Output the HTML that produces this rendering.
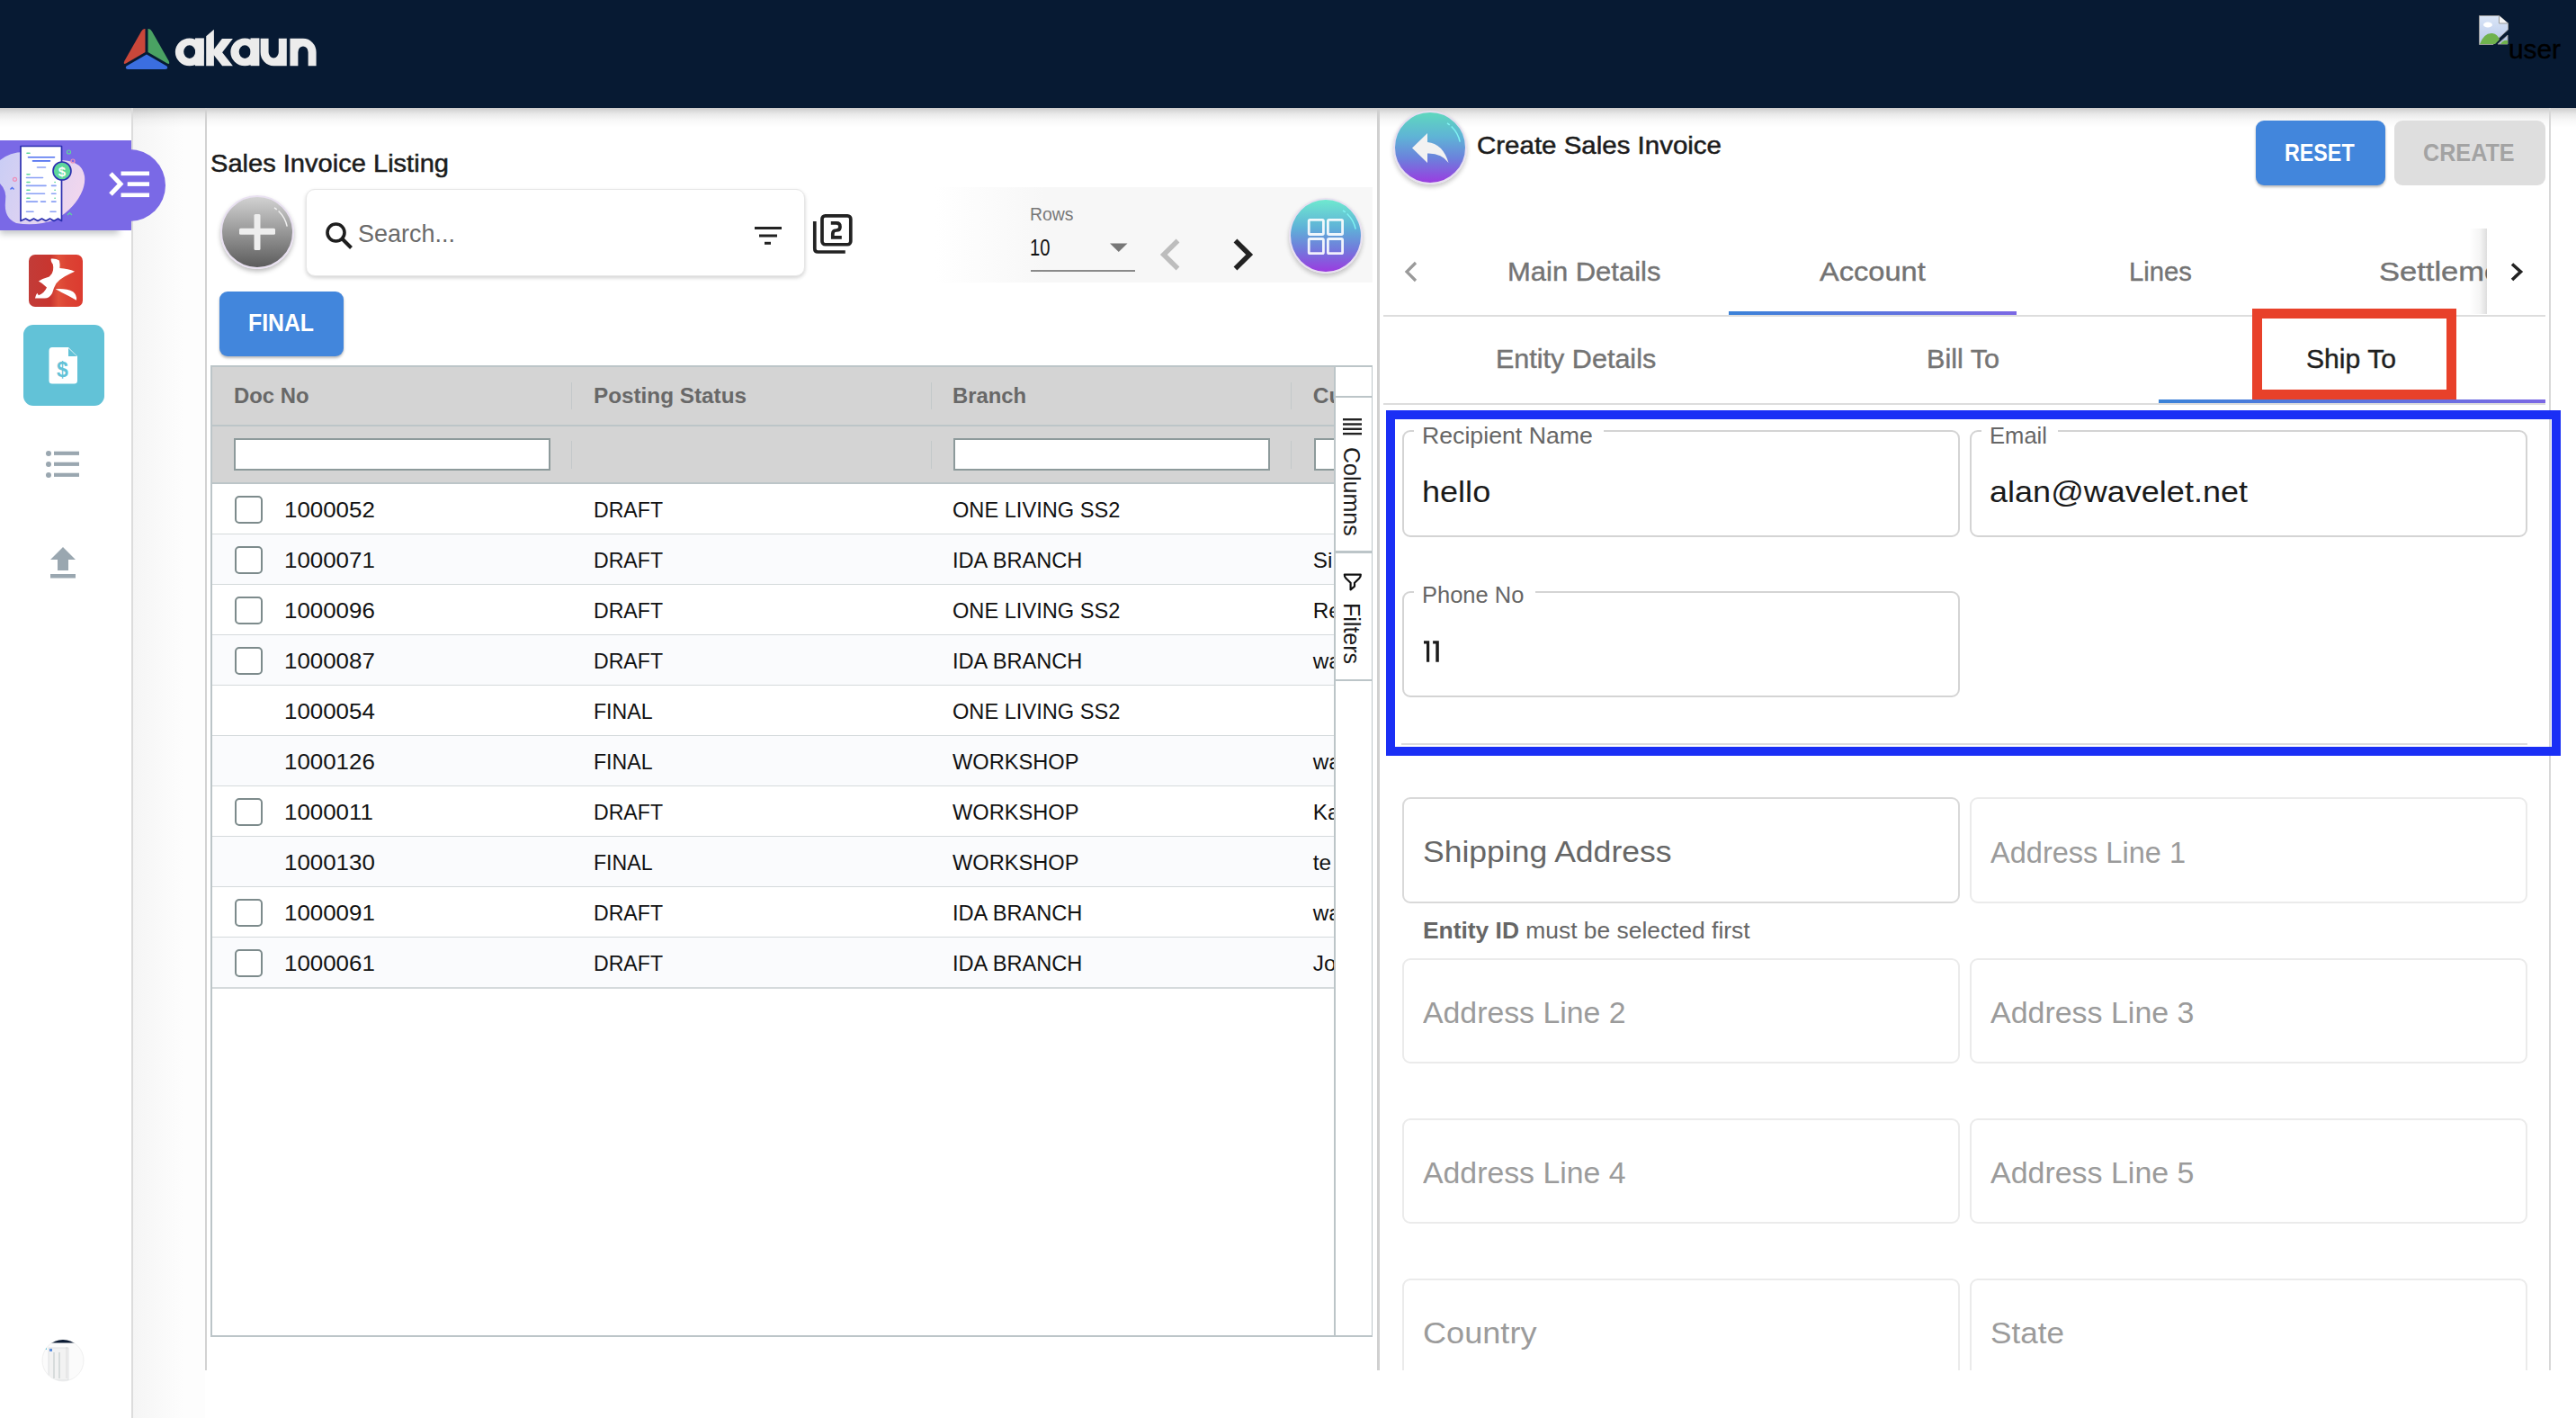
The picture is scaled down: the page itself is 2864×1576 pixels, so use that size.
<!DOCTYPE html>
<html><head><meta charset="utf-8"><title>akaun</title><style>
html,body{margin:0;padding:0;}
body{width:2864px;height:1576px;position:relative;overflow:hidden;background:#fff;font-family:"Liberation Sans", sans-serif;}
.t{position:absolute;white-space:nowrap;line-height:1;}
.b{position:absolute;box-sizing:border-box;}
svg{position:absolute;overflow:visible;}

</style></head><body>
<div class="b" style="left:0.00px;top:0.00px;width:2864.00px;height:120.00px;background:#071a33;"></div>
<div class="b" style="left:0.00px;top:120.00px;width:2864.00px;height:22.00px;background:linear-gradient(rgba(0,0,0,0.2),rgba(0,0,0,0.09) 30%,rgba(0,0,0,0.03) 60%,rgba(0,0,0,0));"></div>
<div class="b" style="left:146.00px;top:120.00px;width:2.00px;height:1456.00px;background:#dcdcdc;"></div>
<div class="b" style="left:148.00px;top:120.00px;width:80.00px;height:1456.00px;background:linear-gradient(90deg,#f5f5f5,#fdfdfd 70%);"></div>
<div class="b" style="left:148.00px;top:120.00px;width:80.00px;height:22.00px;background:linear-gradient(rgba(0,0,0,0.2),rgba(0,0,0,0.09) 30%,rgba(0,0,0,0.03) 60%,rgba(0,0,0,0));"></div>
<div class="b" style="left:228.00px;top:120.00px;width:2.00px;height:1403.00px;background:#d2d2d2;"></div>
<div class="b" style="left:1531.00px;top:120.00px;width:3.00px;height:1403.00px;background:#d0d0d0;"></div>
<div class="b" style="left:2834.00px;top:120.00px;width:1.50px;height:1403.00px;background:#d8d8d8;"></div>
<svg style="left:136px;top:29px" width="56" height="50" viewBox="0 0 56 50">
<path d="M25.5 3 L25.5 29 L4 41.5 Q0.5 43 2.5 38.5 L21 6 Q23 2.5 25.5 3 Z" fill="#c9473a"/>
<path d="M28.5 3 L28.5 29 L50 41.5 Q53.5 43 51.5 38.5 L33 6 Q31 2.5 28.5 3 Z" fill="#4aa263"/>
<path d="M27 31.5 L49.5 44.5 Q51.5 47.5 48 48 L6 48 Q2.5 47.5 4.5 44.5 Z" fill="#3b6ee0"/>
</svg>
<svg style="left:0px;top:0px" width="400" height="110" viewBox="0 0 400 110"><g fill="#ececec">
<path fill-rule="evenodd" d="M194.85 57.8 A15.85 15.4 0 1 0 226.55 57.8 A15.85 15.4 0 1 0 194.85 57.8 Z M204.2 57.6 A6.5 7.3 0 1 0 217.2 57.6 A6.5 7.3 0 1 0 204.2 57.6 Z"/>
<rect x="217" y="42.4" width="9.9" height="30.8"/>
<path d="M229.2 40.2 L237.9 32.85 V73.2 H229.2 Z"/>
<path d="M236.8 56.2 L246.9 42.9 H258.9 L247.1 58.3 L258.9 73.2 H247.1 L236.8 60 Z"/>
<path fill-rule="evenodd" d="M256.35 57.8 A15.85 15.4 0 1 0 288.05 57.8 A15.85 15.4 0 1 0 256.35 57.8 Z M265.7 57.6 A6.5 7.3 0 1 0 278.7 57.6 A6.5 7.3 0 1 0 265.7 57.6 Z"/>
<rect x="278.5" y="42.4" width="9.9" height="30.8"/>
<path d="M289.6 42.7 V57.9 A14.6 15.3 0 0 0 304.2 73.2 H318.8 V42.7 H309.8 V57.9 A5.6 6.5 0 0 1 298.6 57.9 V42.7 Z"/>
<path d="M322.4 73.2 V42.7 H337 A14.6 15.3 0 0 1 351.6 57.9 V73.2 H342.6 V57.9 A5.6 6.5 0 0 0 331.4 57.9 V73.2 Z"/>
</g></svg>
<svg style="left:2756px;top:17px" width="33" height="33" viewBox="0 0 33 33">
<defs><linearGradient id="bi" x1="0" y1="0" x2="0" y2="1"><stop offset="0" stop-color="#dbe6f7"/><stop offset="1" stop-color="#b7c8ea"/></linearGradient></defs>
<path d="M0.5 0.5 H22.5 L32.5 9 V16 L16 31 V32.5 H0.5 Z" fill="url(#bi)" stroke="#9a9a9a" stroke-width="1"/>
<path d="M22.5 0.5 V9 H32.5" fill="#f4f4f4" stroke="#9a9a9a" stroke-width="1"/>
<path d="M1 32 Q6 19 15 20 Q21 21 23 27 L18 32 Z" fill="#6fb24d"/>
<path d="M21 32 L32 22 V32 Z" fill="#b7c8ea" stroke="#9a9a9a" stroke-width="1"/>
<path d="M24 32 Q27 27 32 28 V32 Z" fill="#6fb24d"/>
<ellipse cx="10" cy="10.5" rx="5" ry="3" fill="#fff"/>
</svg>
<div id="t0" class="t" style="left:2788.80px;top:40.95px;font-size:29.00px;color:#000;font-weight:400;transform:scaleX(1.0280);transform-origin:0 0;-webkit-text-stroke:0.4px #000;">user</div>
<div class="b" style="left:0.00px;top:156.00px;width:146.00px;height:99.50px;background:#7a69e6;"></div>
<div class="b" style="left:0.00px;top:200.00px;width:132.00px;height:55.50px;background:#7a69e6;box-shadow:0 4px 7px rgba(40,50,60,0.28);"></div>
<div class="b" style="left:0.00px;top:156.00px;width:146.00px;height:99.50px;background:#7a69e6;"></div>
<div class="b" style="left:60.00px;top:165.70px;width:124.00px;height:80.50px;background:#7a69e6;border-radius:0 40px 40px 0;"></div>
<svg style="left:0px;top:156px" width="100" height="100" viewBox="0 0 100 100">
<defs><linearGradient id="blob" x1="0" y1="0" x2="1" y2="0.3"><stop offset="0" stop-color="#c9cdf5"/><stop offset="1" stop-color="#efd6ee"/></linearGradient></defs>
<path d="M0 22 Q12 12 30 13 L68 22 Q80 22 88 28 Q98 38 92 55 Q84 75 62 88 Q40 96 18 92 Q4 86 6 68 Q8 56 0 48 Z" fill="url(#blob)"/>
<path d="M23 6.5 H68.5 V89.5 L64.5 87 L60 89.5 L55.5 87 L51 89.5 L46.5 87 L42 89.5 L37.5 87 L33 89.5 L28.5 87 L23 89.5 Z" fill="#fff" stroke="#2b2fb0" stroke-width="1.7" stroke-linejoin="round"/>
<g stroke-width="1.6" stroke-linecap="round">
<line x1="30" y1="14.2" x2="33" y2="14.2" stroke="#5ed79b"/>
<line x1="31.5" y1="18.7" x2="60.5" y2="18.7" stroke="#4e6ef0"/>
<line x1="36.5" y1="22.9" x2="55.5" y2="22.9" stroke="#4e6ef0"/>
<line x1="41.5" y1="30" x2="50.5" y2="30" stroke="#8aa0f5"/>
<line x1="30" y1="37.7" x2="33" y2="37.7" stroke="#5ed79b"/>
<line x1="29.5" y1="41.5" x2="47.5" y2="41.5" stroke="#8aa0f5"/>
<line x1="30" y1="46.5" x2="33" y2="46.5" stroke="#5ed79b"/>
<line x1="29.5" y1="50.4" x2="51" y2="50.4" stroke="#8aa0f5"/>
<line x1="57.5" y1="50.4" x2="62" y2="50.4" stroke="#8aa0f5"/>
<line x1="61" y1="46.5" x2="61.2" y2="46.5" stroke="#5ed79b"/>
<line x1="30" y1="55.3" x2="33" y2="55.3" stroke="#5ed79b"/>
<line x1="61" y1="55.3" x2="61.2" y2="55.3" stroke="#5ed79b"/>
<line x1="29.5" y1="59.2" x2="49.5" y2="59.2" stroke="#8aa0f5"/>
<line x1="57.5" y1="59.2" x2="62" y2="59.2" stroke="#8aa0f5"/>
<line x1="30" y1="64.2" x2="33" y2="64.2" stroke="#5ed79b"/>
<line x1="61" y1="64.2" x2="61.2" y2="64.2" stroke="#5ed79b"/>
<line x1="29.5" y1="68.1" x2="41.5" y2="68.1" stroke="#8aa0f5"/>
<line x1="45.5" y1="68.1" x2="50.5" y2="68.1" stroke="#8aa0f5"/>
<line x1="57.5" y1="68.1" x2="62" y2="68.1" stroke="#8aa0f5"/>
<line x1="29.5" y1="79.3" x2="37" y2="79.3" stroke="#8aa0f5"/>
<line x1="56" y1="79.3" x2="62" y2="79.3" stroke="#8aa0f5"/>
</g>
<circle cx="69" cy="34" r="10" fill="#5ed79b" stroke="#2b2fb0" stroke-width="1.6"/>
<text x="69" y="39.5" font-family="Liberation Sans" font-weight="700" font-size="15" fill="#fff" text-anchor="middle">$</text>
<circle cx="76.5" cy="13" r="2" fill="none" stroke="#5ed79b" stroke-width="1.2"/>
<circle cx="81" cy="23" r="2" fill="none" stroke="#ee8fb8" stroke-width="1.2"/>
<circle cx="16.5" cy="43.3" r="2" fill="none" stroke="#ee8fb8" stroke-width="1.3"/>
<path d="M11.5 54.5 L13.5 52.5 L15.5 54.5" fill="none" stroke="#4e6ef0" stroke-width="1.4"/>
<path d="M75 83 L77.5 80.5 L80 83" fill="none" stroke="#5ed79b" stroke-width="1.2"/>
</svg>
<svg style="left:120px;top:188px" width="50" height="34" viewBox="0 0 50 34">
<path d="M3 5 L14 16.5 L3 28" fill="none" stroke="#fff" stroke-width="5"/>
<rect x="14.5" y="2.5" width="31.5" height="4.6" fill="#fff"/>
<rect x="21.7" y="14.3" width="24.3" height="4.6" fill="#fff"/>
<rect x="14.5" y="26.5" width="31.5" height="4.6" fill="#fff"/>
</svg>
<svg style="left:32px;top:283px" width="60" height="58" viewBox="0 0 60 58">
<defs><linearGradient id="rg" x1="0" y1="0" x2="1" y2="0">
<stop offset="0" stop-color="#c23c38"/><stop offset="0.4" stop-color="#c8352f"/><stop offset="0.55" stop-color="#e1513b"/><stop offset="0.7" stop-color="#dc4434"/><stop offset="1" stop-color="#dc3b30"/></linearGradient></defs>
<rect x="0" y="0" width="60" height="58" rx="7" fill="url(#rg)"/>
<path d="M24.8 4.6 Q30 4 33.9 6.5 Q35 11 34.4 15.1 Q44 15.5 51.1 18.8 Q45 21.5 40 24.3 Q33.5 28 30.5 32 Q27.5 37 26 43 Q23 48.5 17.6 48.5 L7 48.5 Q7.5 45 9.4 42.8 L10.9 45.3 Q17.5 42.5 20 36.5 Q15 31.5 10.9 29.5 Q17 26 22.8 24.5 Q26.5 21.5 27 17.5 Q27.5 13 26.8 10.8 Q24 7 24.8 4.6 Z" fill="#fff"/>
<path d="M29.6 38.2 Q42 37.3 49.2 41.3 Q53.8 45 53 50.8 Q44.5 45.8 36.5 42 Q33 39.8 29.6 38.2 Z" fill="#fff"/>
</svg>
<div class="b" style="left:26.00px;top:361.00px;width:90.00px;height:90.00px;background:#62c2d7;border-radius:11px;"></div>
<svg style="left:54px;top:386px" width="33" height="41" viewBox="0 0 33 41">
<path d="M4 0 H22 L32 10 V37 Q32 40.5 28.5 40.5 H4 Q0.5 40.5 0.5 37 V4 Q0.5 0 4 0 Z" fill="#fff"/>
<path d="M22 1 V10 H31.5 Z" fill="#62c2d7"/>
<text x="15.5" y="33" font-family="Liberation Sans" font-weight="700" font-size="23" fill="#62c2d7" text-anchor="middle">$</text>
</svg>
<svg style="left:50px;top:500px" width="40" height="32" viewBox="0 0 40 32">
<circle cx="4" cy="4" r="3" fill="#9aa7b0"/><circle cx="4" cy="16" r="3" fill="#9aa7b0"/><circle cx="4" cy="28" r="3" fill="#9aa7b0"/>
<rect x="10" y="1.7" width="28" height="4.2" fill="#9aa7b0"/><rect x="10" y="13.7" width="28" height="4.2" fill="#9aa7b0"/><rect x="10" y="25.7" width="28" height="4.2" fill="#9aa7b0"/>
</svg>
<svg style="left:56px;top:608px" width="29" height="35" viewBox="0 0 29 35">
<path d="M14 0 L28 14 H20 V26 H8 V14 H0 Z" fill="#9aa7b0"/>
<rect x="0" y="30" width="28" height="4.5" fill="#9aa7b0"/>
</svg>
<svg style="left:46px;top:1488px" width="48" height="48" viewBox="0 0 48 48">
<defs><clipPath id="av"><circle cx="24" cy="24" r="23"/></clipPath></defs>
<circle cx="24" cy="24" r="23" fill="#fbfbfb" stroke="#f0f0f0" stroke-width="1"/>
<g clip-path="url(#av)">
<rect x="0" y="0" width="48" height="4.5" fill="#0b1a33"/>
<rect x="8" y="10" width="22" height="36" fill="#f2f2f2" stroke="#cfd4d8" stroke-width="0.6"/>
<rect x="9" y="11" width="3" height="3" fill="#5b8fe0"/>
<rect x="2" y="9" width="4" height="3" fill="#62c2d7"/>
<line x1="14" y1="15" x2="14" y2="44" stroke="#9aa" stroke-width="0.6"/>
<line x1="20" y1="15" x2="20" y2="44" stroke="#9aa" stroke-width="0.6"/>
<line x1="28" y1="9" x2="28" y2="44" stroke="#ccc" stroke-width="0.6"/>
</g>
</svg>
<div id="t1" class="t" style="left:233.80px;top:167.72px;font-size:27.50px;color:#1c1c1c;font-weight:400;transform:scaleX(1.0570);transform-origin:0 0;-webkit-text-stroke:0.5px #1c1c1c;">Sales Invoice Listing</div>
<div class="b" style="left:245px;top:217px;width:82px;height:82px;border-radius:50%;background:linear-gradient(#d2d2d2,#5c5c5c);border:2px solid #e9e1f1;box-shadow:0 3px 5px rgba(0,0,0,0.25);"></div>
<svg style="left:245px;top:217px" width="82" height="82" viewBox="0 0 82 82">
<rect x="21" y="36.8" width="40" height="7" rx="1.5" fill="#eeeeee"/>
<rect x="37.5" y="21" width="7" height="40" rx="1.5" fill="#eeeeee"/>
<path d="M60 13.8 A34 34 0 0 1 74.2 34.6" fill="none" stroke="#f0f0f0" stroke-width="1.5" stroke-dasharray="3.5 2.5 60"/>
</svg>
<div class="b" style="left:340.00px;top:210.00px;width:555.00px;height:96.50px;background:#fff;border-radius:10px;border:1px solid #e6e6e6;box-shadow:0 2px 4px rgba(0,0,0,0.18);"></div>
<svg style="left:361px;top:246px" width="33" height="33" viewBox="0 0 33 33">
<circle cx="12.5" cy="12.5" r="9.5" fill="none" stroke="#1e1e1e" stroke-width="3.6"/>
<line x1="19.5" y1="19.5" x2="29.5" y2="29.5" stroke="#1e1e1e" stroke-width="4"/>
</svg>
<div id="t2" class="t" style="left:397.80px;top:245.72px;font-size:27.50px;color:#6a6a6a;font-weight:400;transform:scaleX(0.9813);transform-origin:0 0;">Search...</div>
<svg style="left:838px;top:251px" width="32" height="22" viewBox="0 0 32 22">
<rect x="1" y="1" width="30" height="3" fill="#222"/>
<rect x="6" y="9.5" width="20" height="3" fill="#222"/>
<rect x="12" y="17.8" width="7" height="3" fill="#222"/>
</svg>
<svg style="left:903px;top:237px" width="46" height="46" viewBox="0 0 46 46">
<path d="M2.8 9 V39.5 Q2.8 43 6.3 43 H36.8" fill="none" stroke="#222" stroke-width="3.7"/>
<rect x="11" y="2.85" width="31.8" height="31.9" rx="3.5" fill="none" stroke="#222" stroke-width="3.7"/>
<path d="M20.8 10.9 H27 Q31 10.9 31 15 Q31 19 27 19 H26.8 Q22.8 19 22.8 23 V26.85 H32.8" fill="none" stroke="#222" stroke-width="3.7"/>
</svg>
<div class="b" style="left:1040.00px;top:208.00px;width:486.00px;height:105.50px;background:linear-gradient(90deg,rgba(247,247,247,0),#f7f7f7 25%,#f7f7f7);"></div>
<div id="t3" class="t" style="left:1145.30px;top:227.64px;font-size:20.50px;color:#777;font-weight:400;transform:scaleX(0.9461);transform-origin:0 0;">Rows</div>
<div id="t4" class="t" style="left:1145.30px;top:261.56px;font-size:26.50px;color:#111;font-weight:400;transform:scaleX(0.7631);transform-origin:0 0;">10</div>
<svg style="left:1233px;top:270px" width="22" height="11" viewBox="0 0 22 11"><path d="M1 0.5 H20.5 L10.75 10 Z" fill="#777"/></svg>
<div class="b" style="left:1146.00px;top:299.80px;width:116.00px;height:2.00px;background:#8a8a8a;"></div>
<svg style="left:1286px;top:264px" width="30" height="40" viewBox="0 0 30 40">
<path d="M23.5 3.5 L7.8 19 L23.5 34.5" fill="none" stroke="#bdbdbd" stroke-width="5.5"/>
</svg>
<svg style="left:1367px;top:264px" width="30" height="40" viewBox="0 0 30 40">
<path d="M6.5 3.5 L22.2 19 L6.5 34.5" fill="none" stroke="#222" stroke-width="5.5"/>
</svg>
<div class="b" style="left:1433px;top:220px;width:82px;height:84px;border-radius:50%;background:linear-gradient(#6fe9cf,#5fb0d8 40%,#7378dc 70%,#9b3be0);border:2px solid #e8e0f0;box-shadow:0 3px 5px rgba(0,0,0,0.22);"></div>
<svg style="left:1433px;top:220px" width="82" height="84" viewBox="0 0 82 84">
<g fill="none" stroke="#fff" stroke-opacity="0.9" stroke-width="2.8">
<rect x="22.2" y="24.3" width="16.2" height="16.2" rx="1.2"/><rect x="43.4" y="24.3" width="16.2" height="16.2" rx="1.2"/>
<rect x="22.2" y="45.5" width="16.2" height="16.2" rx="1.2"/><rect x="43.4" y="45.5" width="16.2" height="16.2" rx="1.2"/>
</g>
<path d="M60 13.8 A34 34 0 0 1 74.2 34.6" fill="none" stroke="#80f2f2" stroke-width="1.5" stroke-dasharray="3.5 2.5 60"/>
</svg>
<div class="b" style="left:244.00px;top:324.00px;width:138.00px;height:72.00px;background:#4286dc;border-radius:9px;box-shadow:0 2px 3px rgba(0,0,0,0.28);"></div>
<div id="t5" class="t" style="left:275.80px;top:344.47px;font-size:28.50px;color:#fff;font-weight:700;transform:scaleX(0.8700);transform-origin:0 0;">FINAL</div>
<div class="b" style="left:234.00px;top:406.00px;width:1291.50px;height:1079.50px;border:2px solid #bcc5c8;background:#fff;"></div>
<div class="b" style="left:236.00px;top:408.00px;width:1247.00px;height:129.00px;background:#d4d4d4;"></div>
<div class="b" style="left:236.00px;top:471.80px;width:1247.00px;height:2.00px;background:#bcc5c8;"></div>
<div class="b" style="left:236.00px;top:536.00px;width:1247.00px;height:2.00px;background:#bcc5c8;"></div>
<div class="b" style="left:634.50px;top:425.00px;width:1.50px;height:30.00px;background:#c3c8ca;"></div>
<div class="b" style="left:634.50px;top:490.00px;width:1.50px;height:31.00px;background:#c3c8ca;"></div>
<div class="b" style="left:1034.50px;top:425.00px;width:1.50px;height:30.00px;background:#c3c8ca;"></div>
<div class="b" style="left:1034.50px;top:490.00px;width:1.50px;height:31.00px;background:#c3c8ca;"></div>
<div class="b" style="left:1434.50px;top:425.00px;width:1.50px;height:30.00px;background:#c3c8ca;"></div>
<div class="b" style="left:1434.50px;top:490.00px;width:1.50px;height:31.00px;background:#c3c8ca;"></div>
<div id="t6" class="t" style="left:259.80px;top:428.06px;font-size:24.50px;color:#686868;font-weight:700;transform:scaleX(0.9738);transform-origin:0 0;">Doc No</div>
<div id="t7" class="t" style="left:659.80px;top:428.06px;font-size:24.50px;color:#686868;font-weight:700;transform:scaleX(0.9912);transform-origin:0 0;">Posting Status</div>
<div id="t8" class="t" style="left:1058.80px;top:428.06px;font-size:24.50px;color:#686868;font-weight:700;transform:scaleX(0.9713);transform-origin:0 0;">Branch</div>
<div id="t9" class="t" style="left:1459.80px;top:428.06px;font-size:24.50px;color:#686868;font-weight:700;">Cu</div>
<div class="b" style="left:260.00px;top:487.00px;width:351.50px;height:35.50px;background:#fff;border:2px solid #8d9a9b;"></div>
<div class="b" style="left:1060.00px;top:487.00px;width:351.50px;height:35.50px;background:#fff;border:2px solid #8d9a9b;"></div>
<div class="b" style="left:1460.50px;top:487.00px;width:30.00px;height:35.50px;background:#fff;border:2px solid #8d9a9b;"></div>
<div class="b" style="left:236.00px;top:592.55px;width:1247.00px;height:1.50px;background:#d5dadc;"></div>
<div class="b" style="left:260.50px;top:550.50px;width:31.00px;height:31.00px;border:2px solid #7d8b8c;border-radius:5px;background:#fff;"></div>
<div id="t10" class="t" style="left:315.50px;top:554.83px;font-size:24.30px;color:#111;font-weight:400;transform:scaleX(1.066);transform-origin:0 0;">1000052</div>
<div id="t11" class="t" style="left:659.80px;top:554.83px;font-size:24.30px;color:#111;font-weight:400;transform:scaleX(0.951);transform-origin:0 0;">DRAFT</div>
<div id="t12" class="t" style="left:1059.40px;top:554.83px;font-size:24.30px;color:#111;font-weight:400;transform:scaleX(0.972);transform-origin:0 0;">ONE LIVING SS2</div>
<div class="b" style="left:236.00px;top:594.05px;width:1247.00px;height:56.05px;background:#fafbfd;"></div>
<div class="b" style="left:236.00px;top:648.60px;width:1247.00px;height:1.50px;background:#d5dadc;"></div>
<div class="b" style="left:260.50px;top:606.55px;width:31.00px;height:31.00px;border:2px solid #7d8b8c;border-radius:5px;background:#fff;"></div>
<div id="t13" class="t" style="left:315.50px;top:610.88px;font-size:24.30px;color:#111;font-weight:400;transform:scaleX(1.066);transform-origin:0 0;">1000071</div>
<div id="t14" class="t" style="left:659.80px;top:610.88px;font-size:24.30px;color:#111;font-weight:400;transform:scaleX(0.951);transform-origin:0 0;">DRAFT</div>
<div id="t15" class="t" style="left:1059.40px;top:610.88px;font-size:24.30px;color:#111;font-weight:400;transform:scaleX(0.972);transform-origin:0 0;">IDA BRANCH</div>
<div id="t16" class="t" style="left:1459.80px;top:610.88px;font-size:24.30px;color:#111;font-weight:400;">Si</div>
<div class="b" style="left:236.00px;top:704.65px;width:1247.00px;height:1.50px;background:#d5dadc;"></div>
<div class="b" style="left:260.50px;top:662.60px;width:31.00px;height:31.00px;border:2px solid #7d8b8c;border-radius:5px;background:#fff;"></div>
<div id="t17" class="t" style="left:315.50px;top:666.93px;font-size:24.30px;color:#111;font-weight:400;transform:scaleX(1.066);transform-origin:0 0;">1000096</div>
<div id="t18" class="t" style="left:659.80px;top:666.93px;font-size:24.30px;color:#111;font-weight:400;transform:scaleX(0.951);transform-origin:0 0;">DRAFT</div>
<div id="t19" class="t" style="left:1059.40px;top:666.93px;font-size:24.30px;color:#111;font-weight:400;transform:scaleX(0.972);transform-origin:0 0;">ONE LIVING SS2</div>
<div id="t20" class="t" style="left:1459.80px;top:666.93px;font-size:24.30px;color:#111;font-weight:400;">Re</div>
<div class="b" style="left:236.00px;top:706.15px;width:1247.00px;height:56.05px;background:#fafbfd;"></div>
<div class="b" style="left:236.00px;top:760.70px;width:1247.00px;height:1.50px;background:#d5dadc;"></div>
<div class="b" style="left:260.50px;top:718.65px;width:31.00px;height:31.00px;border:2px solid #7d8b8c;border-radius:5px;background:#fff;"></div>
<div id="t21" class="t" style="left:315.50px;top:722.98px;font-size:24.30px;color:#111;font-weight:400;transform:scaleX(1.066);transform-origin:0 0;">1000087</div>
<div id="t22" class="t" style="left:659.80px;top:722.98px;font-size:24.30px;color:#111;font-weight:400;transform:scaleX(0.951);transform-origin:0 0;">DRAFT</div>
<div id="t23" class="t" style="left:1059.40px;top:722.98px;font-size:24.30px;color:#111;font-weight:400;transform:scaleX(0.972);transform-origin:0 0;">IDA BRANCH</div>
<div id="t24" class="t" style="left:1459.80px;top:722.98px;font-size:24.30px;color:#111;font-weight:400;">wa</div>
<div class="b" style="left:236.00px;top:816.75px;width:1247.00px;height:1.50px;background:#d5dadc;"></div>
<div id="t25" class="t" style="left:315.50px;top:779.03px;font-size:24.30px;color:#111;font-weight:400;transform:scaleX(1.066);transform-origin:0 0;">1000054</div>
<div id="t26" class="t" style="left:659.80px;top:779.03px;font-size:24.30px;color:#111;font-weight:400;transform:scaleX(0.951);transform-origin:0 0;">FINAL</div>
<div id="t27" class="t" style="left:1059.40px;top:779.03px;font-size:24.30px;color:#111;font-weight:400;transform:scaleX(0.972);transform-origin:0 0;">ONE LIVING SS2</div>
<div class="b" style="left:236.00px;top:818.25px;width:1247.00px;height:56.05px;background:#fafbfd;"></div>
<div class="b" style="left:236.00px;top:872.80px;width:1247.00px;height:1.50px;background:#d5dadc;"></div>
<div id="t28" class="t" style="left:315.50px;top:835.08px;font-size:24.30px;color:#111;font-weight:400;transform:scaleX(1.066);transform-origin:0 0;">1000126</div>
<div id="t29" class="t" style="left:659.80px;top:835.08px;font-size:24.30px;color:#111;font-weight:400;transform:scaleX(0.951);transform-origin:0 0;">FINAL</div>
<div id="t30" class="t" style="left:1059.40px;top:835.08px;font-size:24.30px;color:#111;font-weight:400;transform:scaleX(0.972);transform-origin:0 0;">WORKSHOP</div>
<div id="t31" class="t" style="left:1459.80px;top:835.08px;font-size:24.30px;color:#111;font-weight:400;">wa</div>
<div class="b" style="left:236.00px;top:928.85px;width:1247.00px;height:1.50px;background:#d5dadc;"></div>
<div class="b" style="left:260.50px;top:886.80px;width:31.00px;height:31.00px;border:2px solid #7d8b8c;border-radius:5px;background:#fff;"></div>
<div id="t32" class="t" style="left:315.50px;top:891.13px;font-size:24.30px;color:#111;font-weight:400;transform:scaleX(1.066);transform-origin:0 0;">1000011</div>
<div id="t33" class="t" style="left:659.80px;top:891.13px;font-size:24.30px;color:#111;font-weight:400;transform:scaleX(0.951);transform-origin:0 0;">DRAFT</div>
<div id="t34" class="t" style="left:1059.40px;top:891.13px;font-size:24.30px;color:#111;font-weight:400;transform:scaleX(0.972);transform-origin:0 0;">WORKSHOP</div>
<div id="t35" class="t" style="left:1459.80px;top:891.13px;font-size:24.30px;color:#111;font-weight:400;">Ka</div>
<div class="b" style="left:236.00px;top:930.35px;width:1247.00px;height:56.05px;background:#fafbfd;"></div>
<div class="b" style="left:236.00px;top:984.90px;width:1247.00px;height:1.50px;background:#d5dadc;"></div>
<div id="t36" class="t" style="left:315.50px;top:947.18px;font-size:24.30px;color:#111;font-weight:400;transform:scaleX(1.066);transform-origin:0 0;">1000130</div>
<div id="t37" class="t" style="left:659.80px;top:947.18px;font-size:24.30px;color:#111;font-weight:400;transform:scaleX(0.951);transform-origin:0 0;">FINAL</div>
<div id="t38" class="t" style="left:1059.40px;top:947.18px;font-size:24.30px;color:#111;font-weight:400;transform:scaleX(0.972);transform-origin:0 0;">WORKSHOP</div>
<div id="t39" class="t" style="left:1459.80px;top:947.18px;font-size:24.30px;color:#111;font-weight:400;">te</div>
<div class="b" style="left:236.00px;top:1040.95px;width:1247.00px;height:1.50px;background:#d5dadc;"></div>
<div class="b" style="left:260.50px;top:998.90px;width:31.00px;height:31.00px;border:2px solid #7d8b8c;border-radius:5px;background:#fff;"></div>
<div id="t40" class="t" style="left:315.50px;top:1003.23px;font-size:24.30px;color:#111;font-weight:400;transform:scaleX(1.066);transform-origin:0 0;">1000091</div>
<div id="t41" class="t" style="left:659.80px;top:1003.23px;font-size:24.30px;color:#111;font-weight:400;transform:scaleX(0.951);transform-origin:0 0;">DRAFT</div>
<div id="t42" class="t" style="left:1059.40px;top:1003.23px;font-size:24.30px;color:#111;font-weight:400;transform:scaleX(0.972);transform-origin:0 0;">IDA BRANCH</div>
<div id="t43" class="t" style="left:1459.80px;top:1003.23px;font-size:24.30px;color:#111;font-weight:400;">wa</div>
<div class="b" style="left:236.00px;top:1042.45px;width:1247.00px;height:56.05px;background:#fafbfd;"></div>
<div class="b" style="left:236.00px;top:1097.00px;width:1247.00px;height:1.50px;background:#d5dadc;"></div>
<div class="b" style="left:260.50px;top:1054.95px;width:31.00px;height:31.00px;border:2px solid #7d8b8c;border-radius:5px;background:#fff;"></div>
<div id="t44" class="t" style="left:315.50px;top:1059.28px;font-size:24.30px;color:#111;font-weight:400;transform:scaleX(1.066);transform-origin:0 0;">1000061</div>
<div id="t45" class="t" style="left:659.80px;top:1059.28px;font-size:24.30px;color:#111;font-weight:400;transform:scaleX(0.951);transform-origin:0 0;">DRAFT</div>
<div id="t46" class="t" style="left:1059.40px;top:1059.28px;font-size:24.30px;color:#111;font-weight:400;transform:scaleX(0.972);transform-origin:0 0;">IDA BRANCH</div>
<div id="t47" class="t" style="left:1459.80px;top:1059.28px;font-size:24.30px;color:#111;font-weight:400;">Jo</div>
<div class="b" style="left:1483.00px;top:408.00px;width:41.50px;height:1075.50px;background:#fff;border-left:2px solid #bcc5c8;"></div>
<div class="b" style="left:1485.00px;top:440.00px;width:39.50px;height:2.00px;background:#bcc5c8;"></div>
<div class="b" style="left:1485.00px;top:611.50px;width:39.50px;height:3.00px;background:#bcc5c8;"></div>
<div class="b" style="left:1485.00px;top:755.00px;width:39.50px;height:2.00px;background:#bcc5c8;"></div>
<svg style="left:1493px;top:465px" width="22" height="19" viewBox="0 0 22 19">
<g fill="#222"><rect x="0" y="0" width="21" height="2.4"/><rect x="0" y="5.3" width="21" height="2.4"/><rect x="0" y="10.6" width="21" height="2.4"/><rect x="0" y="15.9" width="21" height="2.4"/></g>
</svg>
<div class="t" style="left:1494px;top:496.5px;font-size:25px;color:#1a1a1a;transform-origin:0 0;transform:translate(21px,0) rotate(90deg);">Columns</div>
<svg style="left:1493px;top:637px" width="22" height="21" viewBox="0 0 22 21">
<path d="M1.8 1.6 H19.8 Q20 4 18.2 5.8 L13 10.8 V14.6 L8.6 18.4 V10.8 L3.4 5.8 Q1.6 4 1.8 1.6 Z" fill="none" stroke="#111" stroke-width="2.2" stroke-linejoin="round"/>
</svg>
<div class="t" style="left:1494px;top:670px;font-size:25px;color:#1a1a1a;transform-origin:0 0;transform:translate(21px,0) rotate(90deg);">Filters</div>
<div class="b" style="left:1534px;top:120px;width:1300px;height:1403px;overflow:hidden;">
<div class="b" style="left:15.00px;top:3.00px;width:82.00px;height:82.00px;border-radius:50%;background:linear-gradient(#5fd8be,#5fb3d6 35%,#6b82dc 65%,#9a3ce0);border:2px solid #e6dff0;box-shadow:0 3px 5px rgba(0,0,0,0.22);"></div>
<svg style="left:15.00px;top:3.00px" width="82" height="82" viewBox="0 0 82 82"><path d="M21 41.5 L38 25 V35 Q55 36.5 61.5 58 Q54 47 38 47.5 V58 Z" fill="#f2f2f2"/><path d="M60 13.8 A34 34 0 0 1 74.2 34.6" fill="none" stroke="#80f2f2" stroke-width="1.5" stroke-dasharray="3.5 2.5 60"/></svg>
<div id="t48" class="t" style="left:107.80px;top:28.42px;font-size:27.50px;color:#1c1c1c;font-weight:400;transform:scaleX(1.0719);transform-origin:0 0;-webkit-text-stroke:0.5px #1c1c1c;">Create Sales Invoice</div>
<div class="b" style="left:974.00px;top:14.00px;width:144.00px;height:72.00px;background:#4286dc;border-radius:9px;box-shadow:0 2px 3px rgba(0,0,0,0.28);"></div>
<div id="t49" class="t" style="left:1006.20px;top:35.07px;font-size:28.50px;color:#fff;font-weight:700;transform:scaleX(0.8166);transform-origin:0 0;">RESET</div>
<div class="b" style="left:1128.00px;top:14.00px;width:168.00px;height:72.00px;background:#dedede;border-radius:9px;"></div>
<div id="t50" class="t" style="left:1159.50px;top:35.07px;font-size:28.50px;color:#a3a3a3;font-weight:700;transform:scaleX(0.8830);transform-origin:0 0;">CREATE</div>
<svg style="left:24.00px;top:168.00px" width="24" height="30" viewBox="0 0 24 30"><path d="M16 4 L6 14 L16 24" fill="none" stroke="#9a9a9a" stroke-width="3.2"/></svg>
<div id="t51" class="t" style="left:141.80px;top:166.72px;font-size:29.50px;color:#747474;font-weight:400;transform:scaleX(1.0498);transform-origin:0 0;-webkit-text-stroke:0.4px #747474;">Main Details</div>
<div id="t52" class="t" style="left:488.80px;top:166.72px;font-size:29.50px;color:#737373;font-weight:400;transform:scaleX(1.1042);transform-origin:0 0;-webkit-text-stroke:0.4px #737373;">Account</div>
<div id="t53" class="t" style="left:832.80px;top:166.72px;font-size:29.50px;color:#747474;font-weight:400;transform:scaleX(0.9925);transform-origin:0 0;-webkit-text-stroke:0.4px #747474;">Lines</div>
<div id="t54" class="t" style="left:1110.80px;top:166.72px;font-size:29.50px;color:#747474;font-weight:400;transform:scaleX(1.1700);transform-origin:0 0;-webkit-text-stroke:0.4px #747474;">Settlement</div>
<div class="b" style="left:4.00px;top:230.00px;width:1292.00px;height:2.00px;background:#dddddd;"></div>
<div class="b" style="left:388.00px;top:226.00px;width:319.50px;height:4.00px;background:linear-gradient(90deg,#3b82d8,#7b68e4);"></div>
<div class="b" style="left:1211.00px;top:134.00px;width:20.00px;height:95.00px;background:linear-gradient(90deg,rgba(0,0,0,0),rgba(0,0,0,0.04) 60%,rgba(0,0,0,0.13));"></div>
<div class="b" style="left:1231.00px;top:134.00px;width:70.00px;height:95.00px;background:#fff;"></div>
<svg style="left:1250.00px;top:169.00px" width="26" height="28" viewBox="0 0 26 28"><path d="M9 4.5 L18.5 13 L9 22" fill="none" stroke="#222" stroke-width="3.6"/></svg>
<div id="t55" class="t" style="left:129.10px;top:264.65px;font-size:29.00px;color:#747474;font-weight:400;transform:scaleX(1.0530);transform-origin:0 0;-webkit-text-stroke:0.4px #747474;">Entity Details</div>
<div id="t56" class="t" style="left:608.10px;top:264.65px;font-size:29.00px;color:#747474;font-weight:400;transform:scaleX(1.0554);transform-origin:0 0;-webkit-text-stroke:0.4px #747474;">Bill To</div>
<div id="t57" class="t" style="left:1029.80px;top:264.65px;font-size:29.00px;color:#1f1f1f;font-weight:400;transform:scaleX(1.0393);transform-origin:0 0;-webkit-text-stroke:0.4px #1f1f1f;">Ship To</div>
<div class="b" style="left:4.00px;top:328.40px;width:1292.00px;height:2.00px;background:#dddddd;"></div>
<div class="b" style="left:866.00px;top:324.00px;width:430.00px;height:4.00px;background:linear-gradient(90deg,#3b82d8,#7b68e4);"></div>
<div class="b" style="left:969.50px;top:222.80px;width:227.50px;height:101.00px;border:11px solid #e8412a;"></div>
<div class="b" style="left:24.50px;top:358.00px;width:620.00px;height:119.00px;border:2px solid #d4d4d4;border-radius:9px;"></div>
<div class="b" style="left:38.00px;top:356.00px;width:211.00px;height:6.00px;background:#fff;"></div>
<div id="t58" class="t" style="left:47.00px;top:351.73px;font-size:25.00px;color:#666;font-weight:400;transform:scaleX(1.0671);transform-origin:0 0;">Recipient Name</div>
<div id="t59" class="t" style="left:47.00px;top:410.06px;font-size:33.00px;color:#1a1a1a;font-weight:400;transform:scaleX(1.0927);transform-origin:0 0;">hello</div>
<div class="b" style="left:655.50px;top:358.00px;width:620.00px;height:119.00px;border:2px solid #d4d4d4;border-radius:9px;"></div>
<div class="b" style="left:669.00px;top:356.00px;width:85.00px;height:6.00px;background:#fff;"></div>
<div id="t60" class="t" style="left:678.30px;top:351.73px;font-size:25.00px;color:#666;font-weight:400;transform:scaleX(1.0237);transform-origin:0 0;">Email</div>
<div id="t61" class="t" style="left:678.30px;top:410.06px;font-size:33.00px;color:#1a1a1a;font-weight:400;transform:scaleX(1.0920);transform-origin:0 0;">alan@wavelet.net</div>
<div class="b" style="left:24.50px;top:536.50px;width:620.00px;height:118.00px;border:2px solid #d4d4d4;border-radius:9px;"></div>
<div class="b" style="left:38.00px;top:534.50px;width:135.00px;height:6.00px;background:#fff;"></div>
<div id="t62" class="t" style="left:47.00px;top:529.43px;font-size:25.00px;color:#666;font-weight:400;transform:scaleX(1.0198);transform-origin:0 0;">Phone No</div>
<svg style="left:46.00px;top:590.00px" width="24" height="28" viewBox="0 0 24 28"><path d="M3 2.2 H9.2 V25.8 H6 V5.5 H3 Z M13.1 2.2 H19.8 V25.8 H16.3 V5.5 H13.1 Z" fill="#1c1c1c"/></svg>
<div class="b" style="left:24.00px;top:706.00px;width:1252.00px;height:1.50px;background:#dcdcdc;"></div>
<div class="b" style="left:24.50px;top:766.40px;width:620.00px;height:117.50px;border:2px solid #d9d9d9;border-radius:9px;"></div>
<div id="t63" class="t" style="left:48.10px;top:810.44px;font-size:33.50px;color:#666;font-weight:400;transform:scaleX(1.0604);transform-origin:0 0;">Shipping Address</div>
<div class="b" style="left:655.50px;top:766.40px;width:620.00px;height:117.50px;border:2px solid #ebebeb;border-radius:9px;"></div>
<div id="t64" class="t" style="left:678.80px;top:810.94px;font-size:33.50px;color:#9b9b9b;font-weight:400;transform:scaleX(0.9710);transform-origin:0 0;">Address Line 1</div>
<div id="t65" class="t" style="left:48.10px;top:902.23px;font-size:25.00px;color:#666;font-weight:400;transform:scaleX(1.0553);transform-origin:0 0;"><b>Entity ID</b> must be selected first</div>
<div class="b" style="left:24.50px;top:944.60px;width:620.00px;height:117.50px;border:2px solid #ebebeb;border-radius:9px;"></div>
<div class="b" style="left:655.50px;top:944.60px;width:620.00px;height:117.50px;border:2px solid #ebebeb;border-radius:9px;"></div>
<div id="t66" class="t" style="left:48.10px;top:988.74px;font-size:33.50px;color:#9b9b9b;font-weight:400;transform:scaleX(1.0090);transform-origin:0 0;">Address Line 2</div>
<div id="t67" class="t" style="left:678.80px;top:988.74px;font-size:33.50px;color:#9b9b9b;font-weight:400;transform:scaleX(1.0135);transform-origin:0 0;">Address Line 3</div>
<div class="b" style="left:24.50px;top:1122.80px;width:620.00px;height:117.50px;border:2px solid #ebebeb;border-radius:9px;"></div>
<div class="b" style="left:655.50px;top:1122.80px;width:620.00px;height:117.50px;border:2px solid #ebebeb;border-radius:9px;"></div>
<div id="t68" class="t" style="left:48.10px;top:1166.94px;font-size:33.50px;color:#9b9b9b;font-weight:400;transform:scaleX(1.0090);transform-origin:0 0;">Address Line 4</div>
<div id="t69" class="t" style="left:678.80px;top:1166.94px;font-size:33.50px;color:#9b9b9b;font-weight:400;transform:scaleX(1.0135);transform-origin:0 0;">Address Line 5</div>
<div class="b" style="left:24.50px;top:1301.00px;width:620.00px;height:117.50px;border:2px solid #ebebeb;border-radius:9px;"></div>
<div class="b" style="left:655.50px;top:1301.00px;width:620.00px;height:117.50px;border:2px solid #ebebeb;border-radius:9px;"></div>
<div id="t70" class="t" style="left:48.10px;top:1345.14px;font-size:33.50px;color:#9b9b9b;font-weight:400;transform:scaleX(1.0783);transform-origin:0 0;">Country</div>
<div id="t71" class="t" style="left:678.80px;top:1345.14px;font-size:33.50px;color:#9b9b9b;font-weight:400;transform:scaleX(1.0481);transform-origin:0 0;">State</div>
</div>
<div class="b" style="left:1540.70px;top:456.20px;width:1306.60px;height:384.00px;border:10.5px solid #1a2ff5;"></div>
</body></html>
